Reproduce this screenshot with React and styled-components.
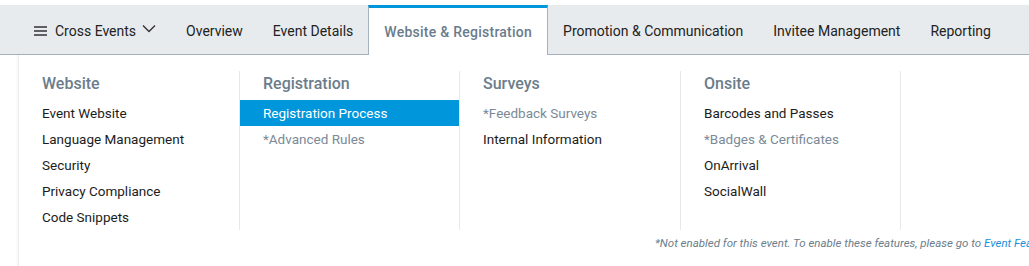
import React from 'react';
import styled, { createGlobalStyle } from 'styled-components';

const GlobalStyle = createGlobalStyle`
  body {
    margin: 0;
    background: #fff;
    font-family: Roboto, "Liberation Sans", Arial, sans-serif;
  }
`;

const Page = styled.div`
  width: 1029px;
  height: 266px;
  overflow: hidden;
  padding-top: 5px;
  box-sizing: border-box;
`;

const TabBar = styled.nav`
  display: flex;
  height: 50px;
  box-sizing: border-box;
  background: #e8ebee;
  border-bottom: 1px solid #a5b3bf;
  padding-left: 19px;
`;

const Tab = styled.div`
  display: flex;
  align-items: center;
  gap: 8px;
  padding: 2px 15px 0;
  font-size: 14px;
  color: #222;
  white-space: nowrap;
  box-sizing: border-box;
  ${(p) =>
    p.$active &&
    `
    background: #fff;
    color: #6a7c8b;
    font-weight: 500;
    letter-spacing: 0.25px;
    height: 50px;
    margin-bottom: -1px;
    padding-top: 1px;
    border-top: 3px solid #0096db;
    border-left: 1px solid #a5b3bf;
    border-right: 1px solid #a5b3bf;
  `}
`;

const Panel = styled.div`
  margin-left: 18px;
  width: 1100px;
  border-left: 1px solid #ececec;
  box-shadow: -1px 0 2px rgba(0, 0, 0, 0.04);
  padding-top: 16px;
  height: 220px;
  box-sizing: border-box;
`;

const Columns = styled.div`
  display: grid;
  grid-template-columns: 221px 220px 221px 220px;
`;

const Column = styled.div`
  border-right: 1px solid #e6e8ea;
  height: 159px;
`;

const Heading = styled.div`
  height: 29px;
  padding: 2px 23px 0;
  box-sizing: border-box;
  font-size: 16px;
  font-weight: 500;
  color: #6b7d8b;
  line-height: 22px;
`;

const Item = styled.div`
  height: 26px;
  line-height: 26px;
  padding: 0 23px;
  font-size: 13.5px;
  color: ${(p) => (p.$disabled ? '#7b8a97' : p.$selected ? '#fff' : '#1c1c1c')};
  background: ${(p) => (p.$selected ? '#0096db' : 'transparent')};
  white-space: nowrap;
`;

const Note = styled.div`
  padding-left: 636px;
  margin-top: 5px;
  font-size: 11.5px;
  font-style: italic;
  color: #6b7d8b;
  white-space: nowrap;
  line-height: 16px;
`;

const NoteLink = styled.span`
  color: #1a8fd8;
`;

const MenuIcon = () => (
  <svg width="13" height="10" viewBox="0 0 13 10">
    <path d="M0 1h13M0 5h13M0 9h13" stroke="#333" strokeWidth="1.3" />
  </svg>
);

const Chevron = () => (
  <svg width="14" height="9" viewBox="0 0 14 9" style={{ marginLeft: -2, marginTop: -4 }}>
    <path d="M1 1.5l6 6 6-6" fill="none" stroke="#333" strokeWidth="1.4" />
  </svg>
);

const tabs = [
  'Overview',
  'Event Details',
  'Website & Registration',
  'Promotion & Communication',
  'Invitee Management',
  'Reporting',
];

const columns = [
  {
    title: 'Website',
    items: [
      { label: 'Event Website' },
      { label: 'Language Management' },
      { label: 'Security' },
      { label: 'Privacy Compliance' },
      { label: 'Code Snippets' },
    ],
  },
  {
    title: 'Registration',
    items: [
      { label: 'Registration Process', selected: true },
      { label: '*Advanced Rules', disabled: true },
    ],
  },
  {
    title: 'Surveys',
    items: [
      { label: '*Feedback Surveys', disabled: true },
      { label: 'Internal Information' },
    ],
  },
  {
    title: 'Onsite',
    items: [
      { label: 'Barcodes and Passes' },
      { label: '*Badges & Certificates', disabled: true },
      { label: 'OnArrival' },
      { label: 'SocialWall' },
    ],
  },
];

export default function App() {
  return (
    <Page>
      <GlobalStyle />
      <TabBar>
        <Tab>
          <MenuIcon />
          Cross Events
          <Chevron />
        </Tab>
        {tabs.map((t) => (
          <Tab key={t} $active={t === 'Website & Registration'}>
            {t}
          </Tab>
        ))}
      </TabBar>
      <Panel>
        <Columns>
          {columns.map((col) => (
            <Column key={col.title}>
              <Heading>{col.title}</Heading>
              {col.items.map((it) => (
                <Item key={it.label} $selected={it.selected} $disabled={it.disabled}>
                  {it.label}
                </Item>
              ))}
            </Column>
          ))}
        </Columns>
        <Note>
          *Not enabled for this event. To enable these features, please go to{' '}
          <NoteLink>Event Features</NoteLink>.
        </Note>
      </Panel>
    </Page>
  );
}
